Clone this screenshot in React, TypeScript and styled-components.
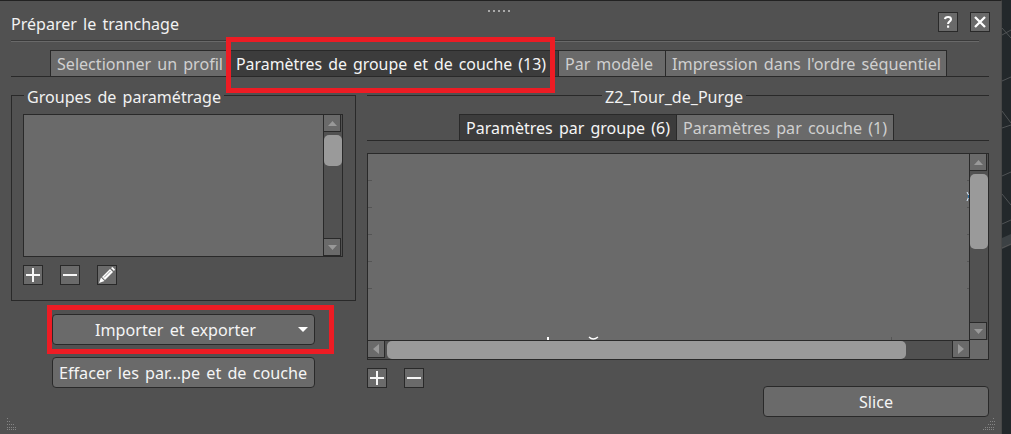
import React from "react";
import styled, { createGlobalStyle } from "styled-components";

const line = "#292929";
const face = "#6a6a6a";
const panel = "#515151";

const Global = createGlobalStyle`
  *{box-sizing:border-box}
  body{margin:0;background:#23282b;overflow:hidden;font:16.5px/20px "Noto Sans",sans-serif;color:#f2f2f2}
`;
const Screen = styled.div`position:relative;display:flex;width:1011px;height:434px;overflow:hidden;`;
const Dialog = styled.main`
  position:relative;width:1002px;height:434px;flex:none;background:${panel};
  border-top:1px solid #222;border-right:1px solid #484848;
  padding:11px 12px 0 11px;display:flex;flex-direction:column;
`;
const Viewport = styled.svg`display:block;width:9px;height:434px;flex:none;`;
const Label = styled.span<{ $w: number }>`
  display:block;flex:none;width:${p => p.$w}px;white-space:pre;text-align:left;word-spacing:2px;
  > svg{display:block;overflow:visible}
`;
const Header = styled.header`display:flex;height:28px;gap:12px;align-items:flex-start;margin-right:-1px;`;
const Title = styled.h1`margin:2px auto 0 0;font:inherit;`;
const Rule = styled.div`height:2px;width:968px;background:#3a3a3a;border-bottom:1px solid #696969;flex:none;`;
const Square = styled.button`
  width:20px;height:20px;padding:0;border:1px solid ${line};background:${face};color:#fff;flex:none;
  svg{display:block}
`;
const Tabs = styled.nav<{ $indent: number; $top: number }>`
  display:flex;flex:none;height:27px;margin-top:${p => p.$top}px;padding-left:${p => p.$indent}px;border-bottom:1px solid ${line};
`;
const Tab = styled.button<{ $w: number; $active?: boolean; $last?: boolean }>`
  width:${p => p.$w}px;height:26px;flex:none;padding:0 0 0 6px;font:inherit;text-align:left;
  border:solid ${line};border-width:1px ${p => (p.$last ? 1 : 0)}px 0 1px;
  background:${p => (p.$active ? "#3c3c3c" : face)};color:${p => (p.$active ? "#f5f5f5" : "#d0d0d0")};
`;
const Columns = styled.div`display:flex;gap:11px;flex:none;`;
const Left = styled.section`width:345px;display:flex;flex-direction:column;padding-top:18px;`;
const Right = styled.section`width:622px;display:flex;flex-direction:column;padding-top:10px;`;
const Group = styled.section`
  display:flex;flex-direction:column;width:345px;height:206px;border:1px solid ${line};border-top:0;padding:0 11px;
`;
const Caption = styled.div<{ $lead: number; $pad: number; $outer?: boolean }>`
  display:flex;align-items:flex-start;flex:none;height:20px;gap:${p => p.$pad}px;
  margin:${p => (p.$outer ? "-8px -12px 7px" : "0")};
  &::before{content:"";height:1px;margin-top:8px;width:${p => p.$lead}px;background:${line};flex:none}
  &::after{content:"";height:1px;margin-top:8px;flex:1;background:${line}}
`;
const List = styled.div`display:flex;flex:none;width:320px;height:143px;border:1px solid ${line};background:${face};`;
const Blank = styled.div`flex:1;min-width:0;`;
const VBar = styled.div`width:19px;flex:none;border-left:1px solid ${line};display:flex;flex-direction:column;background:${panel};`;
const Arrow = styled.div<{ $w: number; $h: number; $edges: string }>`
  width:${p => p.$w}px;height:${p => p.$h}px;flex:none;background:${face};
  border:solid ${line};border-width:${p => p.$edges};display:grid;place-items:center;svg{display:block}
`;
const Thumb = styled.div<{ $w: number; $h: number; $m: string }>`
  width:${p => p.$w}px;height:${p => p.$h}px;margin:${p => p.$m};flex:none;background:#9a9a9a;border-radius:5px;
`;
const Tools = styled.div<{ $top: number }>`display:flex;gap:17px;margin-top:${p => p.$top}px;`;
const Actions = styled.div`display:flex;flex-direction:column;gap:12px;margin:13px 0 0 41px;`;
const Button = styled.button<{ $w: number; $lead: number }>`
  width:${p => p.$w}px;height:31px;display:flex;align-items:center;flex:none;padding:0 6px 0 ${p => p.$lead}px;
  border:1px solid ${line};border-radius:4px;background:${face};color:#f5f5f5;font:inherit;
  > svg{margin-left:auto}
`;
const Table = styled.div`width:622px;height:207px;margin-top:12px;border:1px solid ${line};background:${face};display:flex;flex-direction:column;`;
const TableTop = styled.div`display:flex;height:186px;flex:none;`;
const HBar = styled.div`display:flex;height:19px;flex:none;`;
const HTrack = styled.div`display:flex;width:602px;border-top:1px solid ${line};background:${panel};`;
const Footer = styled.footer`display:flex;justify-content:flex-end;margin-top:-2px;`;
const Highlight = styled.div<{ $x: number; $y: number; $w: number; $h: number }>`
  position:absolute;left:${p => p.$x}px;top:${p => p.$y}px;width:${p => p.$w}px;height:${p => p.$h}px;border:5px solid #ed1c24;pointer-events:none;
`;
const Grip = styled.svg<{ $x: number; $y: number }>`position:absolute;left:${p => p.$x}px;top:${p => p.$y}px;`;

const Text = ({ w, children }: { w: number; children: string }) => (
  <Label $w={w}>
    <svg width={w} height="20"><text x="0" y="16" fill="currentColor" textLength={w} lengthAdjust="spacingAndGlyphs">{children}</text></svg>
  </Label>
);
const paths: Record<string, string> = { up: "M0 5L4.5 0L9 5Z", down: "M0 0H9L4.5 5Z", left: "M6 0V10L0 5Z", right: "M0 0V10L6 5Z" };
const Tri = ({ d }: { d: string }) => <svg width={d === "up" || d === "down" ? 9 : 6} height={d === "up" || d === "down" ? 5 : 10}><path d={paths[d]} fill="#999" /></svg>;
const Plus = () => <Square><svg width="18" height="18"><path d="M2 9H16M9 2V16" stroke="#f7f7f7" strokeWidth="2" /></svg></Square>;
const Minus = () => <Square><svg width="18" height="18"><path d="M2 9H16" stroke="#f7f7f7" strokeWidth="2" /></svg></Square>;

export default function App() {
  return <><Global /><Screen>
    <Dialog>
      <Header>
        <Title><Text w={168}>Préparer le tranchage</Text></Title>
        <Square><svg width="18" height="18"><path d="M6 6.2Q6.2 4 9.1 4Q12 4 12 6.3Q12 7.6 10.4 8.6Q9.1 9.4 9.1 11M9.1 12.5V14.8" fill="none" stroke="#fff" strokeWidth="2.1" /></svg></Square>
        <Square><svg width="18" height="18"><path d="M4 4L14 14M14 4L4 14" stroke="#fff" strokeWidth="2.3" /></svg></Square>
      </Header>
      <Rule />
      <Tabs $indent={39} $top={8}>
        <Tab $w={179}><Text w={166}>Selectionner un profil</Text></Tab>
        <Tab $w={329} $active><Text w={310}>Paramètres de groupe et de couche (13)</Text></Tab>
        <Tab $w={107}><Text w={88}>Par modèle</Text></Tab>
        <Tab $w={282} $last><Text w={269}>Impression dans l'ordre séquentiel</Text></Tab>
      </Tabs>
      <Columns>
        <Left>
          <Group>
            <Caption $lead={13} $pad={3} $outer><Text w={194}>Groupes de paramétrage</Text></Caption>
            <List><Blank /><VBar>
              <Arrow $w={17} $h={17} $edges="0 1px 1px 0"><Tri d="up" /></Arrow>
              <Thumb $w={18} $h={31} $m="3px 0 auto" />
              <Arrow $w={17} $h={18} $edges="1px 1px 1px 0"><Tri d="down" /></Arrow>
            </VBar></List>
            <Tools $top={8}><Plus /><Minus />
              <Square><svg width="18" height="18"><path d="M1 17L3 11.5L6.5 15Z" fill="#fff" /><path d="M4 11L12 3L15 6L7 14Z" fill="#fff" /><path d="M13 2L14.5 1L17 3.5L16 5Z" fill="#fff" /><path d="M6 11.5L12.5 5" stroke="#6a6a6a" strokeWidth=".7" /></svg></Square>
            </Tools>
          </Group>
          <Actions>
            <Button $w={263} $lead={42}><Text w={161}>Importer et exporter</Text><svg width="10" height="5"><path d="M0 0H10L5 5Z" fill="#fff" /></svg></Button>
            <Button $w={263} $lead={6}><Text w={248}>Effacer les par...pe et de couche</Text></Button>
          </Actions>
        </Left>
        <Right>
          <Caption $lead={235} $pad={3}><Text w={138}>Z2_Tour_de_Purge</Text></Caption>
          <Tabs $indent={92} $top={7}>
            <Tab $w={217} $active><Text w={204}>Paramètres par groupe (6)</Text></Tab>
            <Tab $w={218} $last><Text w={204}>Paramètres par couche (1)</Text></Tab>
          </Tabs>
          <Table>
            <TableTop>
              <svg width="601" height="186"><path d="M0 26.5H4M0 53.5H4M0 80.5H4M0 107.5H4M0 134.5H4M599 26.5H601M599 53.5H601M599 80.5H601M599 107.5H601M599 134.5H601M523.5 183V186" stroke="#555" /><path d="M180 183V186" stroke="#fff" strokeWidth="2" /><path d="M221 183Q225 187 230 183" stroke="#fff" fill="none" strokeWidth="1.3" /><path d="M599 38L601 42L599 47" stroke="#d9edff" fill="none" /><path d="M600.5 41V44" stroke="#28699c" /></svg>
              <VBar>
                <Arrow $w={17} $h={17} $edges="0 1px 1px 0"><Tri d="up" /></Arrow>
                <Thumb $w={18} $h={75} $m="3px 0 auto" />
                <Arrow $w={17} $h={18} $edges="1px 1px 1px 0"><Tri d="down" /></Arrow>
              </VBar>
            </TableTop>
            <HBar><HTrack>
              <Arrow $w={17} $h={17} $edges="0 1px 1px 0"><Tri d="left" /></Arrow>
              <Thumb $w={519} $h={18} $m="0 auto 0 2px" />
              <Arrow $w={18} $h={17} $edges="0 1px 1px 1px"><Tri d="right" /></Arrow>
            </HTrack></HBar>
          </Table>
          <Tools $top={8}><Plus /><Minus /></Tools>
          <Footer><Button $w={226} $lead={95}><Text w={34}>Slice</Text></Button></Footer>
        </Right>
      </Columns>
    </Dialog>
    <Viewport><rect width="9" height="434" fill="#23282b" /><path d="M0 35L9 30M0 28L9 38M0 81L9 77M0 111L9 123M0 128L9 125M0 176L9 172M0 194L9 205M0 224L9 220" stroke="#505355" /><path d="M0 238L9 234V245L0 249Z" fill="#3c4144" /><path d="M0 248L9 244" stroke="#555" /></Viewport>
    <Highlight $x={226} $y={37} $w={329} $h={56} />
    <Highlight $x={47} $y={305} $w={287} $h={49} />
    <Grip $x={487} $y={10} width="25" height="3"><path d="M1 1H3M6 1H8M11 1H13M16 1H18M21 1H23" stroke="#aaa" strokeWidth="2" /></Grip>
    <Grip $x={7} $y={418} width="12" height="12"><path d="M0 .5H1M0 3.5H3M0 6.5H7M0 9.5H10M0 11.5H10" stroke="#858585" strokeDasharray="1 1" /></Grip>
    <Grip $x={983} $y={418} width="12" height="12"><path d="M10 .5H12M7 3.5H12M5 6.5H12M2 9.5H12M0 11.5H12" stroke="#858585" strokeDasharray="1 1" /></Grip>
  </Screen></>;
}
